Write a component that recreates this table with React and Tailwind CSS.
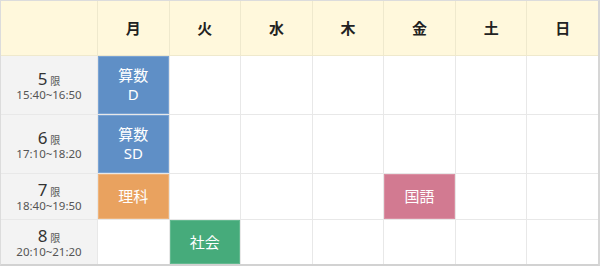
import React from 'react';

const days = ['月', '火', '水', '木', '金', '土', '日'];

const periods = [
  { no: 5, time: '15:40~16:50', h: 'h-[58px]' },
  { no: 6, time: '17:10~18:20', h: 'h-[58px]' },
  { no: 7, time: '18:40~19:50', h: 'h-[45px]' },
  { no: 8, time: '20:10~21:20', h: 'h-[44px]' }
];

// lessons keyed by "period-dayIndex"
const lessons = {
  '5-0': { lines: ['算数', 'D'], color: 'bg-[#5f8fc6] border-[#7aa3d3]' },
  '6-0': { lines: ['算数', 'SD'], color: 'bg-[#5f8fc6] border-[#7aa3d3]' },
  '7-0': { lines: ['理科'], color: 'bg-[#e9a25f] border-[#eeb47c]' },
  '7-4': { lines: ['国語'], color: 'bg-[#d27a91] border-[#da90a3]' },
  '8-1': { lines: ['社会'], color: 'bg-[#46ab7b] border-[#62b98f]' }
};

const App = () => {
  return (
    <div className="w-[600px] h-[268px] bg-white font-['Noto_Sans','Noto_Sans_CJK_JP',sans-serif]">
      <div className="w-[600px] border-t border-l border-[#dcdcdc] border-r-2 border-r-[#d6d6d6] border-b-2 border-b-[#d2d2d2]">
        {/* Header */}
        <div className="grid grid-cols-[96px_repeat(7,1fr)] gap-x-px bg-[#efe9cd] border-b border-[#efe9cd]">
          <div className="h-[54px] bg-[#fff8dc]" />
          {days.map((d) => (
            <div
              key={d}
              className="h-[54px] bg-[#fff8dc] flex items-center justify-center text-[15px] font-bold text-[#222]"
            >
              {d}
            </div>
          ))}
        </div>

        {/* Body */}
        <div className="grid grid-cols-[96px_repeat(7,1fr)] gap-px bg-[#e8e8e8]">
          {periods.map((p) => (
            <React.Fragment key={p.no}>
              <div
                className={`${p.h} bg-[#f3f3f3] flex flex-col items-center justify-center`}
              >
                <div className="flex items-end gap-[3px] text-[#333] h-[18px]">
                  <span className="text-[17px] leading-[18px]">{p.no}</span>
                  <span className="text-[10px] leading-[14px] text-[#555]">限</span>
                </div>
                <span className="text-[11.5px] leading-[13px] text-[#555]">{p.time}</span>
              </div>
              {days.map((d, i) => {
                const l = lessons[`${p.no}-${i}`];
                if (!l) return <div key={d} className={`${p.h} bg-white`} />;
                return (
                  <div
                    key={d}
                    className={`${p.h} ${l.color} border flex flex-col items-center justify-center text-white text-[15px] leading-[19px]`}
                  >
                    {l.lines.map((t) => (
                      <span key={t}>{t}</span>
                    ))}
                  </div>
                );
              })}
            </React.Fragment>
          ))}
        </div>
      </div>
    </div>
  );
};

export default App;
